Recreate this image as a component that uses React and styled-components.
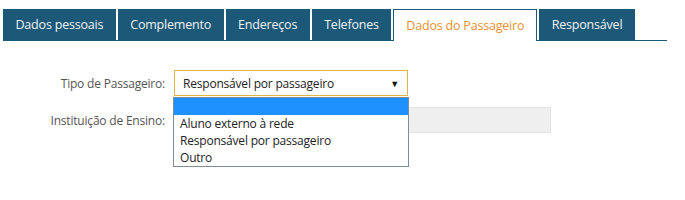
import React from 'react';
import styled, { createGlobalStyle } from 'styled-components';

const GlobalStyle = createGlobalStyle`
  body {
    margin: 0;
    background: #fff;
    font-family: "Open Sans", "Noto Sans", sans-serif;
  }
`;

const tabs = [
  'Dados pessoais',
  'Complemento',
  'Endereços',
  'Telefones',
  'Dados do Passageiro',
  'Responsável'
];

const options = ['', 'Aluno externo à rede', 'Responsável por passageiro', 'Outro'];

const Page = styled.div`
  width: 685px;
  height: 200px;
  overflow: hidden;
`;

const TabBar = styled.div`
  display: flex;
  gap: 2px;
  margin: 9px 18px 0 3px;
  border-bottom: 1px solid #1c5878;
`;

const Tab = styled.div`
  padding: 0 ${({ active }) => (active ? '12px' : '12.5px')};
  display: flex;
  align-items: center;
  font-size: 12.5px;
  letter-spacing: -0.2px;
  box-sizing: border-box;
  color: ${({ active }) => (active ? '#e8922f' : '#f2f2f2')};
  background: ${({ active }) => (active ? '#fff' : '#1c5878')};
  border: ${({ active }) => (active ? '1px solid #1c5878' : 'none')};
  border-bottom: none;
  margin-bottom: ${({ active }) => (active ? '-1px' : '0')};
  height: ${({ active }) => (active ? '32px' : '31px')};
`;

const Form = styled.div`
  display: grid;
  grid-template-columns: 165px auto;
  column-gap: 9px;
  row-gap: 11px;
  margin-top: 29px;
  align-items: center;
`;

const Label = styled.div`
  text-align: right;
  font-size: 12px;
  color: #555;
  letter-spacing: -0.2px;
`;

const SelectWrap = styled.div`
  position: relative;
  width: 234px;
`;

const SelectBox = styled.div`
  height: 26px;
  box-sizing: border-box;
  border: 1px solid #e1b447;
  display: flex;
  align-items: center;
  justify-content: space-between;
  padding: 0 8px;
  font-size: 12px;
  letter-spacing: -0.2px;
  color: #222;
`;

const Arrow = styled.span`
  font-size: 9px;
  color: #111;
`;

const Dropdown = styled.ul`
  position: absolute;
  top: 27px;
  left: -1px;
  width: 236px;
  box-sizing: border-box;
  margin: 0;
  padding: 0;
  list-style: none;
  background: #fff;
  border: 1px solid #7f8d9a;
  z-index: 2;
`;

const Option = styled.li`
  height: 17px;
  line-height: 17px;
  padding: 0 6px;
  font-size: 12px;
  letter-spacing: -0.2px;
  color: #222;
  background: ${({ selected }) => (selected ? '#1e90ff' : '#fff')};
`;

const Input = styled.div`
  width: 377px;
  height: 26px;
  box-sizing: border-box;
  background: #efefef;
  border: 1px solid #e4e4e4;
`;

export default function App() {
  return (
    <Page>
      <GlobalStyle />
      <TabBar>
        {tabs.map((t) => (
          <Tab key={t} active={t === 'Dados do Passageiro'}>
            {t}
          </Tab>
        ))}
      </TabBar>
      <Form>
        <Label>Tipo de Passageiro:</Label>
        <SelectWrap>
          <SelectBox>
            <span>Responsável por passageiro</span>
            <Arrow>▼</Arrow>
          </SelectBox>
          <Dropdown>
            {options.map((o, i) => (
              <Option key={i} selected={i === 0}>
                {o}
              </Option>
            ))}
          </Dropdown>
        </SelectWrap>
        <Label>Instituição de Ensino:</Label>
        <Input />
      </Form>
    </Page>
  );
}
